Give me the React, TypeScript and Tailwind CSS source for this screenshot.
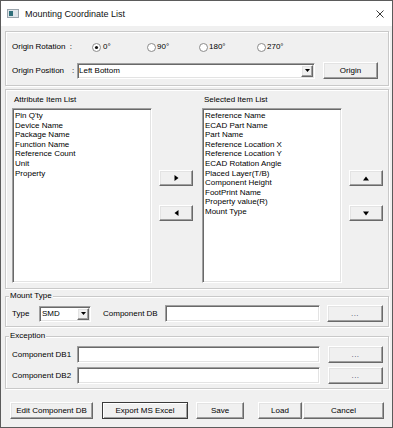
import React from "react";

const sunken =
  "bg-white border border-t-[#a0a0a0] border-l-[#a0a0a0] border-r-white border-b-white shadow-[inset_1px_1px_0_#696969,inset_-1px_-1px_0_#e3e3e3]";
const raised =
  "bg-[#f0f0f0] border border-t-white border-l-white border-r-[#696969] border-b-[#696969] shadow-[inset_-1px_-1px_0_#a0a0a0,inset_1px_1px_0_#e3e3e3]";
const etched = "border border-[#c9c9c9] shadow-[inset_1px_1px_0_#ffffff,1px_1px_0_#ffffff]";

function Btn({ cls, children }: { cls: string; children: React.ReactNode }) {
  return <div className={`${raised} ${cls} flex items-center justify-center`}>{children}</div>;
}

function Radio({ checked }: { checked?: boolean }) {
  return (
    <svg width="9" height="9" viewBox="0 0 9 9">
      <circle cx="4.5" cy="4.5" r="4" fill="#fff" stroke="#8a8a8a" strokeWidth="1" />
      {checked && <circle cx="4.5" cy="4.5" r="1.6" fill="#111" />}
    </svg>
  );
}

function DropArrow() {
  return (
    <div className={`${raised} w-[12px] h-[12px] mr-[1px] flex items-center justify-center shrink-0`}>
      <svg width="5" height="3" viewBox="0 0 5 3">
        <path d="M0 0H5L2.5 3Z" fill="#000" />
      </svg>
    </div>
  );
}

function Tri({ dir }: { dir: "r" | "l" | "u" | "d" }) {
  const d =
    dir === "r" ? "M0.5 0L4.5 3L0.5 6Z" : dir === "l" ? "M4.5 0L0.5 3L4.5 6Z" : dir === "u" ? "M0 4.5L3 0.5L6 4.5Z" : "M0 0.5L3 4.5L6 0.5Z";
  const w = dir === "r" || dir === "l" ? 5 : 6;
  const h = dir === "r" || dir === "l" ? 6 : 5;
  return (
    <svg width={w} height={h} viewBox={`0 0 ${w} ${h}`}>
      <path d={d} fill="#000" />
    </svg>
  );
}

const attrItems = ["Pin Q'ty", "Device Name", "Package Name", "Function Name", "Reference Count", "Unit", "Property"];
const selItems = [
  "Reference Name",
  "ECAD Part Name",
  "Part Name",
  "Reference Location X",
  "Reference Location Y",
  "ECAD Rotation Angle",
  "Placed Layer(T/B)",
  "Component Height",
  "FootPrint Name",
  "Property value(R)",
  "Mount Type",
];

function Dots() {
  return <span className="text-[#4a4a6a] tracking-[0.5px] leading-none">...</span>;
}

export default function App() {
  return (
    <div className="w-[393px] h-[428px] bg-[#f0f0f0] border border-[#5b5b5b] flex flex-col text-[8px] leading-[10px] text-black font-['Liberation_Sans',Arial,sans-serif] overflow-hidden">
      {/* Title bar */}
      <div className="h-[25px] bg-white flex items-center shrink-0">
        <div className="ml-[6px] w-[12px] h-[9px] border border-[#9aa4ac] bg-[#dfe5ea] flex items-center pl-[1px]">
          <div className="w-[4px] h-[5px] bg-[#2f6f7a]" />
        </div>
        <div className="ml-[6px] text-[9px] leading-[12px] text-[#111]">Mounting Coordinate List</div>
        <div className="flex-1" />
        <svg width="8" height="8" viewBox="0 0 8 8" className="mr-[8px]">
          <path d="M0.5 0.5L7.5 7.5M7.5 0.5L0.5 7.5" stroke="#222" strokeWidth="0.9" />
        </svg>
      </div>

      <div className="flex flex-col pl-[4px] pr-[3px]">
        {/* Origin group */}
        <div className={`${etched} mt-[5px] h-[55px] flex flex-col pl-[6px]`}>
          <div className="mt-[10px] h-[10px] flex items-center">
            <span className="w-[80px]">Origin Rotation&nbsp;&nbsp;:</span>
            <span className="w-[55px] flex items-center gap-[2px]">
              <Radio checked />
              <span>0°</span>
            </span>
            <span className="w-[52px] flex items-center gap-[1px]">
              <Radio />
              <span>90°</span>
            </span>
            <span className="w-[58px] flex items-center gap-[1px]">
              <Radio />
              <span>180°</span>
            </span>
            <span className="flex items-center gap-[1px]">
              <Radio />
              <span>270°</span>
            </span>
          </div>
          <div className="mt-[10px] h-[17px] flex items-center">
            <span className="w-[60px]">Origin Position</span>
            <span className="w-[5px]">:</span>
            <div className={`${sunken} w-[238px] h-[16px] flex items-center`}>
              <span className="flex-1 pl-[1px]">Left Bottom</span>
              <DropArrow />
            </div>
            <Btn cls="ml-[8px] w-[55px] h-[17px]">Origin</Btn>
          </div>
        </div>

        {/* Lists group */}
        <div className={`${etched} mt-[3px] h-[200px] flex`}>
          <div className="ml-[6px] flex flex-col">
            <div className="mt-[5px] h-[10px] pl-[2px]">Attribute Item List</div>
            <div className={`${sunken} mt-[3px] w-[140px] h-[175px] pl-[2px] pt-[2px]`}>
              {attrItems.map((t) => (
                <div key={t} className="h-[9.6px] leading-[9.6px] whitespace-nowrap">
                  {t}
                </div>
              ))}
            </div>
          </div>
          <div className="ml-[7px] pt-[80px] flex flex-col gap-[19px]">
            <Btn cls="w-[34px] h-[16px]">
              <Tri dir="r" />
            </Btn>
            <Btn cls="w-[34px] h-[16px]">
              <Tri dir="l" />
            </Btn>
          </div>
          <div className="ml-[9px] flex flex-col">
            <div className="mt-[5px] h-[10px] pl-[2px]">Selected Item List</div>
            <div className={`${sunken} mt-[3px] w-[140px] h-[175px] pl-[2px] pt-[2px]`}>
              {selItems.map((t) => (
                <div key={t} className="h-[9.6px] leading-[9.6px] whitespace-nowrap">
                  {t}
                </div>
              ))}
            </div>
          </div>
          <div className="ml-[7px] pt-[80px] flex flex-col gap-[19px]">
            <Btn cls="w-[34px] h-[16px]">
              <Tri dir="u" />
            </Btn>
            <Btn cls="w-[34px] h-[16px]">
              <Tri dir="d" />
            </Btn>
          </div>
        </div>

        {/* Mount Type */}
        <fieldset className={`${etched} mt-[2px] pb-[4px] min-w-0`}>
          <legend className="ml-[3px] px-[1px] h-[10px] leading-[10px] bg-[#f0f0f0]">Mount Type</legend>
          <div className="mt-[4px] h-[17px] flex items-center pl-[6px]">
            <span className="w-[27px]">Type</span>
            <div className={`${sunken} w-[52px] h-[16px] flex items-center`}>
              <span className="flex-1 pl-[2px]">SMD</span>
              <DropArrow />
            </div>
            <span className="ml-[12px] w-[62px]">Component DB</span>
            <div className={`${sunken} w-[155px] h-[17px]`} />
            <Btn cls="ml-[7px] w-[56px] h-[17px]">
              <Dots />
            </Btn>
          </div>
        </fieldset>

        {/* Exception */}
        <fieldset className={`${etched} mt-[4px] pb-[4px] min-w-0`}>
          <legend className="ml-[3px] px-[1px] h-[10px] leading-[10px] bg-[#f0f0f0]">Exception</legend>
          <div className="mt-[5px] h-[17px] flex items-center pl-[6px]">
            <span className="w-[65px]">Component DB1</span>
            <div className={`${sunken} w-[243px] h-[17px]`} />
            <Btn cls="ml-[8px] w-[55px] h-[17px]">
              <Dots />
            </Btn>
          </div>
          <div className="mt-[4px] h-[17px] flex items-center pl-[6px]">
            <span className="w-[65px]">Component DB2</span>
            <div className={`${sunken} w-[243px] h-[17px]`} />
            <Btn cls="ml-[8px] w-[55px] h-[17px]">
              <Dots />
            </Btn>
          </div>
        </fieldset>

        {/* Bottom buttons */}
        <div className="mt-[13px] flex items-center pl-[5px]">
          <Btn cls="w-[83px] h-[17px]">Edit Component DB</Btn>
          <div className="ml-[9px] w-[86px] h-[17px] border border-[#3a3a3a] flex items-center justify-center bg-[#f0f0f0] shadow-[inset_1px_1px_0_#ffffff,inset_-1px_-1px_0_#a0a0a0]">
            Export MS Excel
          </div>
          <Btn cls="ml-[8px] w-[48px] h-[17px]">Save</Btn>
          <Btn cls="ml-[14px] w-[44px] h-[17px]">Load</Btn>
          <Btn cls="ml-[1px] w-[81px] h-[17px]">Cancel</Btn>
        </div>
      </div>
    </div>
  );
}
